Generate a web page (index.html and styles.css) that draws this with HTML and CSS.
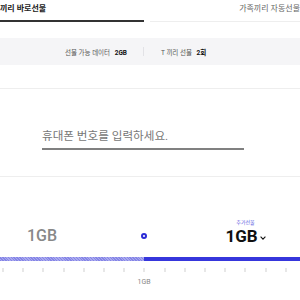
FILE: index.html
```html
<!DOCTYPE html>
<html lang="ko">
<head>
<meta charset="utf-8">
<link rel="stylesheet" href="styles.css">
</head>
<body>
<div class="page">
  <div class="tabs">
    <div class="tab tab-active">끼리 바로선물</div>
    <div class="tab tab-other">가족끼리 자동선물</div>
  </div>
  <div class="info">
    <span class="info-item">선물 가능 데이터 <b>2GB</b></span>
    <span class="sep"></span>
    <span class="info-item">T 끼리 선물 <b>2회</b></span>
  </div>
  <div class="phone-section">
    <div class="phone-field">휴대폰 번호를 입력하세요.</div>
  </div>
  <div class="amount-section">
    <div class="amount-row">
      <div class="amount-left">1GB</div>
      <div class="dot"></div>
      <div class="amount-right">
        <div class="add-label">추가선물</div>
        <div class="amount-value">1GB<svg class="chev" width="6" height="4" viewBox="0 0 6 4"><path d="M0.6 0.7 L3 3.1 L5.4 0.7" fill="none" stroke="#111" stroke-width="1.1"/></svg></div>
      </div>
    </div>
    <div class="bar"><div class="bar-fill"></div><div class="bar-rest"></div></div>
    <div class="ticks"></div>
    <div class="scale-label">1GB</div>
  </div>
</div>
</body>
</html>
```
FILE: styles.css
```css
html, body {
  margin: 0;
  padding: 0;
  background: #fff;
}
.page {
  width: 300px;
  height: 300px;
  overflow: hidden;
  font-family: Roboto, "Noto Sans CJK KR", sans-serif;
  color: #222;
}
.tabs {
  display: flex;
  height: 22px;
}
.tab {
  font-size: 8px;
  line-height: 18px;
  white-space: nowrap;
}
.tab-active {
  width: 144px;
  height: 20px;
  border-bottom: 2px solid #333;
  font-weight: 700;
  color: #222;
}
.tab-other {
  flex: 1;
  margin-left: 6px;
  height: 21px;
  border-bottom: 1px solid #eee;
  text-align: right;
  color: #666;
}
.info {
  margin-top: 16px;
  height: 27px;
  background: #f5f5f7;
  display: flex;
  align-items: center;
  padding-left: 65px;
  font-size: 6.5px;
  color: #555;
}
.info-item b {
  color: #111;
  font-weight: 700;
  margin-left: 3px;
}
.sep {
  width: 1px;
  height: 9px;
  background: #e2e2e6;
  margin: 0 17px 0 16px;
}
.phone-section {
  margin-top: 23px;
  border-top: 1px solid #eee;
  border-bottom: 1px solid #eee;
  height: 87px;
}
.phone-field {
  margin: 39px 0 0 42px;
  width: 202px;
  font-size: 11.6px;
  line-height: 16px;
  color: #777;
  padding-bottom: 4px;
  border-bottom: 2px solid #808080;
}
.amount-section {
  padding-top: 39px;
}
.amount-row {
  display: flex;
  align-items: flex-end;
  height: 30px;
}
.amount-left {
  width: 114px;
  padding-left: 27px;
  font-size: 16px;
  font-weight: 500;
  line-height: 20px;
  color: #888;
}
.dot {
  width: 2px;
  height: 2px;
  border: 2px solid #2a2ad6;
  border-radius: 50%;
  margin-bottom: 7px;
}
.amount-right {
  flex: 1;
  display: flex;
  flex-direction: column;
  align-items: center;
  padding-left: 44px;
}
.add-label {
  font-size: 5px;
  line-height: 8px;
  color: #5a5ae0;
}
.amount-value {
  display: flex;
  align-items: center;
  font-size: 17px;
  font-weight: 700;
  line-height: 20px;
  color: #111;
}
.chev {
  margin-left: 2px;
  margin-top: 3px;
}
.bar {
  display: flex;
  height: 4px;
  margin-top: 11px;
}
.bar-fill {
  width: 144px;
  background: repeating-linear-gradient(45deg, #8585e6 0 1px, #a9a9ef 1px 2px);
}
.bar-rest {
  flex: 1;
  background: #3636dc;
}
.ticks {
  height: 4px;
  margin-top: 7px;
  background: repeating-linear-gradient(to right, #cfcfcf 0 1px, transparent 1px 20.2px);
  background-position: 2.5px 0;
}
.scale-label {
  margin-top: 5px;
  font-size: 7px;
  line-height: 10px;
  color: #888;
  text-align: center;
  width: 288px;
}
```
